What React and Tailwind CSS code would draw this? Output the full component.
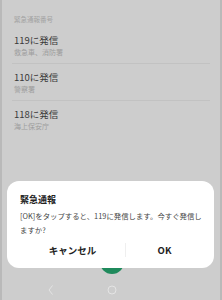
export default function App() {
  const items = [
    { num: "119に発信", sub: "救急車、消防署" },
    { num: "110に発信", sub: "警察署" },
    { num: "118に発信", sub: "海上保安庁" },
  ];
  return (
    <div
      className="relative w-[222px] h-[300px] overflow-hidden bg-[#cdcdcd] border-x-2 border-[#b9b9b9]"
      style={{ fontFamily: '"Noto Sans CJK JP", "Noto Sans", sans-serif' }}
    >
      {/* list */}
      <div className="px-[10px] pt-[13px]">
        <div className="pl-[2px] text-[6.5px] leading-[12px] text-[#a3a3a3]">緊急通報番号</div>
        <div className="mt-[2px] flex flex-col">
          {items.map((it, i) => (
            <div key={it.num} className={i < 2 ? "border-b border-[#c2c2c2]" : ""}>
              <div className="pl-[2px] pt-[6px] pb-[5px]">
                <div className="text-[9.5px] leading-[14px] text-[#3a3a3a]">{it.num}</div>
                <div className="text-[7px] leading-[11px] text-[#9d9d9d]">{it.sub}</div>
              </div>
            </div>
          ))}
        </div>
      </div>

      {/* green call button (behind dialog) */}
      <div className="absolute left-[98px] top-[250px] w-[24px] h-[24px] rounded-full bg-[#1f8a5c]" />

      {/* nav bar */}
      <div className="absolute left-0 right-0 top-[284px] flex items-center pl-[45px] gap-[52px]">
        <svg width="8" height="12" viewBox="0 0 8 12">
          <path d="M5.5 1.5 L2 6 L5.5 10.5" fill="none" stroke="#e4e4e4" strokeWidth="1" />
        </svg>
        <svg width="10" height="10" viewBox="0 0 10 10">
          <circle cx="5" cy="5" r="4" fill="none" stroke="#e4e4e4" strokeWidth="1" />
        </svg>
      </div>

      {/* dialog */}
      <div className="absolute left-[5px] top-[181px] w-[207px] h-[87px] bg-white rounded-[12px] flex flex-col">
        <div className="px-[13px] pt-[13px] text-[9px] leading-[12px] font-bold text-[#222]">緊急通報</div>
        <div className="pl-[13px] pr-[8px] pt-[3px] text-[7.4px] leading-[14px] text-[#444]">
          [OK]をタップすると、119に発信します。今すぐ発信し<br />ますか?
        </div>
        <div className="flex items-center mt-[6px]">
          <div className="w-[118px] pl-[13px] text-center text-[9.5px] font-bold text-[#222] leading-[14px]">キャンセル</div>
          <div className="w-px h-[14px] bg-[#efefef]" />
          <div className="w-[77px] text-center text-[9.5px] font-bold text-[#222] leading-[14px]">OK</div>
        </div>
      </div>
    </div>
  );
}
